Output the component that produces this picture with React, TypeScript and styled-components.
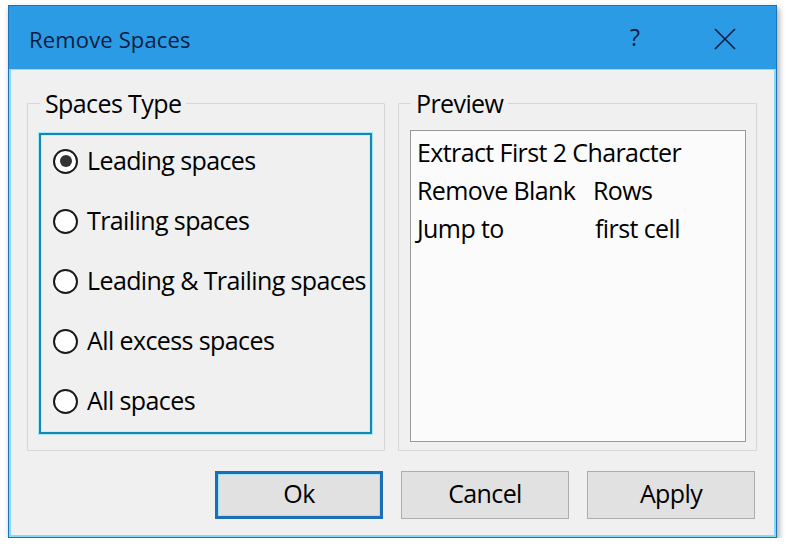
import styled, { createGlobalStyle } from 'styled-components';

const GlobalStyle = createGlobalStyle`
	html, body {
		margin: 0;
		padding: 0;
		background: #ffffff;
	}
	body {
		font-family: 'Open Sans', 'Noto Sans', sans-serif;
		color: #000000;
	}
`;

const Window = styled.div`
	box-sizing: border-box;
	margin: 5px 0 0 8px;
	width: 769px;
	height: 533px;
	border: 1px solid #1d72b8;
	background: #f0f0f0;
	box-shadow: inset 0 0 0 2px #86d9f5, 2px 3px 6px rgba(0, 0, 0, 0.35);
	display: flex;
	flex-direction: column;
`;

const TitleBar = styled.div`
	box-sizing: border-box;
	height: 64px;
	padding: 2px 40px 0 20px;
	background: #2a9be4;
	border-bottom: 1px solid #8fdcf6;
	display: flex;
	align-items: center;
	color: #0f1b42;
`;

const Title = styled.div`
	font-size: 22px;
	letter-spacing: 0.15px;
`;

const TitleButtons = styled.div`
	margin-left: auto;
	display: flex;
	align-items: center;
	gap: 74px;
`;

const Help = styled.span`
	font-size: 23px;
	line-height: 1;
	margin-top: -2px;
	padding-left: 2px;
`;

const Body = styled.div`
	display: flex;
	flex-direction: column;
	padding: 21px 0 0 18px;
`;

const Panels = styled.div`
	display: flex;
	gap: 13px;
`;

const Group = styled.fieldset<{ $width: number }>`
	box-sizing: border-box;
	margin: 0;
	width: ${(p) => p.$width}px;
	height: 360px;
	padding: 0 11px 0 11px;
	border: 1px solid #d6d6d6;
	border-radius: 1px;
	min-width: 0;
`;

const Legend = styled.legend`
	margin-left: 1px;
	padding: 0 5px;
	font-size: 25px;
	line-height: 24px;
	letter-spacing: -0.6px;
	color: #000000;
`;

const OptionBox = styled.div`
	box-sizing: border-box;
	margin-top: 18px;
	width: 333px;
	height: 301px;
	border: 2px solid #1886b0;
	box-shadow: 0 0 0 1px #a5e8f8, inset 0 0 0 1px #c4f0fb;
	padding: 0 0 0 12px;
	display: flex;
	flex-direction: column;
	gap: 8px;
`;

const Option = styled.label`
	height: 52px;
	display: flex;
	align-items: center;
	gap: 9px;
	padding-bottom: 2px;
	box-sizing: border-box;
	font-size: 25px;
	letter-spacing: -0.6px;
	white-space: nowrap;
	color: #000000;
`;

const Radio = styled.span<{ $checked?: boolean }>`
	box-sizing: border-box;
	flex: none;
	width: 25px;
	height: 25px;
	margin-top: 2px;
	border: 2px solid #1a1a1a;
	border-radius: 50%;
	background: #ffffff;
	display: flex;
	align-items: center;
	justify-content: center;
	&::after {
		content: '';
		width: 12px;
		height: 12px;
		border-radius: 50%;
		background: ${(p) => (p.$checked ? '#333333' : 'transparent')};
	}
`;

const PreviewBox = styled.div`
	box-sizing: border-box;
	margin-top: 15px;
	width: 336px;
	height: 312px;
	border: 1px solid #9a9a9a;
	background: #fbfbfb;
	padding: 2px 0 0 6px;
`;

const PreviewLine = styled.div`
	height: 38px;
	line-height: 38px;
	font-size: 25px;
	letter-spacing: -0.6px;
	white-space: nowrap;
	color: #000000;
`;

const LineKey = styled.span<{ $width: number }>`
	display: inline-block;
	width: ${(p) => p.$width}px;
`;

const ButtonRow = styled.div`
	display: flex;
	justify-content: flex-end;
	gap: 18px;
	margin-top: 20px;
	padding-right: 21px;
`;

const Button = styled.button<{ $default?: boolean }>`
	box-sizing: border-box;
	width: 168px;
	height: 48px;
	margin: 0;
	padding: 0 0 4px 0;
	font-family: 'Open Sans', 'Noto Sans', sans-serif;
	font-size: 25px;
	letter-spacing: -0.6px;
	color: #000000;
	background: #e1e1e1;
	border: ${(p) => (p.$default ? '3px solid #1a6fb6' : '1px solid #adadad')};
	box-shadow: ${(p) => (p.$default ? 'inset 0 0 0 1px #9fe3f8' : 'none')};
`;

const options = [
	'Leading spaces',
	'Trailing spaces',
	'Leading & Trailing spaces',
	'All excess spaces',
	'All spaces',
];

function CloseIcon() {
	return (
		<svg width="22" height="22" viewBox="0 0 22 22">
			<path d="M1 1 L21 21 M21 1 L1 21" stroke="#0f1b42" strokeWidth="1.6" fill="none" />
		</svg>
	);
}

function App() {
	return (
		<>
			<GlobalStyle />
			<Window>
				<TitleBar>
					<Title>Remove Spaces</Title>
					<TitleButtons>
						<Help>?</Help>
						<CloseIcon />
					</TitleButtons>
				</TitleBar>
				<Body>
					<Panels>
						<Group $width={358}>
							<Legend>Spaces Type</Legend>
							<OptionBox>
								{options.map((text, i) => (
									<Option key={text}>
										<Radio $checked={i === 0} />
										{text}
									</Option>
								))}
							</OptionBox>
						</Group>
						<Group $width={359}>
							<Legend>Preview</Legend>
							<PreviewBox>
								<PreviewLine>Extract First 2 Character</PreviewLine>
								<PreviewLine>
									<LineKey $width={176}>Remove Blank</LineKey>Rows
								</PreviewLine>
								<PreviewLine>
									<LineKey $width={178}>Jump to</LineKey>first cell
								</PreviewLine>
							</PreviewBox>
						</Group>
					</Panels>
					<ButtonRow>
						<Button $default>Ok</Button>
						<Button>Cancel</Button>
						<Button>Apply</Button>
					</ButtonRow>
				</Body>
			</Window>
		</>
	);
}

export default App;
